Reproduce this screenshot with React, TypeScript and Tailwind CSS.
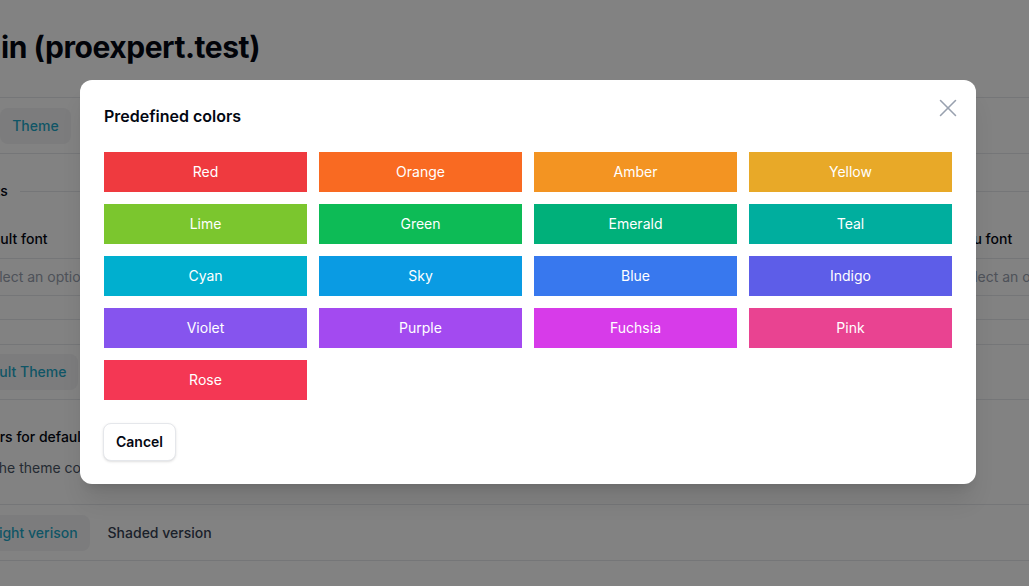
import { X } from 'lucide-react';

const colors = [
  { name: 'Red', hex: 'bg-[#ef3a3f]' },
  { name: 'Orange', hex: 'bg-[#f96a22]' },
  { name: 'Amber', hex: 'bg-[#f39422]' },
  { name: 'Yellow', hex: 'bg-[#e8a928]' },
  { name: 'Lime', hex: 'bg-[#7bc62e]' },
  { name: 'Green', hex: 'bg-[#0dbb56]' },
  { name: 'Emerald', hex: 'bg-[#00b07a]' },
  { name: 'Teal', hex: 'bg-[#00ae9e]' },
  { name: 'Cyan', hex: 'bg-[#00afcf]' },
  { name: 'Sky', hex: 'bg-[#0a9be3]' },
  { name: 'Blue', hex: 'bg-[#3878ee]' },
  { name: 'Indigo', hex: 'bg-[#5d5de8]' },
  { name: 'Violet', hex: 'bg-[#8654ee]' },
  { name: 'Purple', hex: 'bg-[#a34af0]' },
  { name: 'Fuchsia', hex: 'bg-[#d73be9]' },
  { name: 'Pink', hex: 'bg-[#e94391]' },
  { name: 'Rose', hex: 'bg-[#f43754]' },
];

const App = () => {
  return (
    <div className="relative h-[586px] w-full overflow-hidden bg-white font-[Inter,sans-serif] text-gray-950">
      {/* Page behind the modal */}
      <div className="-ml-[31px] w-[1200px]">
        <div className="pt-[29px] pb-8 border-b border-gray-200">
          <h1 className="-ml-[51px] text-[30px] leading-9 font-bold tracking-[-0.015em] whitespace-nowrap">
            Domain (proexpert.test)
          </h1>
        </div>

        <div className="flex items-center gap-2 h-14 border-b border-gray-200 ml-[-53px]">
          <span className="px-3 py-2 text-sm font-medium text-gray-500">General</span>
          <span className="px-3 h-9 flex items-center rounded-lg bg-gray-100 text-sm font-medium text-[#1ea8c8]">Theme</span>
        </div>

        <div className="pt-[27px]">
          <div className="flex items-center gap-3 ml-[2px] h-5">
            <span className="text-sm font-medium leading-5">Fonts</span>
            <div className="flex-1 border-t border-gray-200" />
          </div>

          <div className="mt-7 grid grid-cols-[951px_1fr] gap-x-6">
            {['Default font', 'Menu font'].map((label) => (
              <div key={label}>
                <div className="text-sm font-medium leading-5 whitespace-nowrap">{label}</div>
                <div className="mt-[9px] h-[38px] border-y border-gray-200 flex items-center pl-[13px] text-sm text-gray-400 whitespace-nowrap">
                  Select an option
                </div>
              </div>
            ))}
          </div>
          <div className="mt-[23px] border-t border-gray-200" />
        </div>

        <div className="mt-6 flex items-center h-14 border-y border-gray-200 ml-[-13px]">
          <span className="px-3 h-9 flex items-center rounded-lg bg-gray-100 text-sm font-medium text-[#1ea8c8] whitespace-nowrap">Default Theme</span>
        </div>

        <div className="pt-[27px]">
          <div className="text-sm font-medium leading-5 whitespace-nowrap">Colors for default theme</div>
          <div className="mt-[11px] -ml-[20px] text-sm leading-5 text-gray-600 whitespace-nowrap">Select the theme colors used in the default theme</div>
        </div>

        <div className="mt-[26px] flex items-center gap-1.5 h-[57px] border-y border-gray-200 ml-[10px]">
          <span className="px-3 h-9 flex items-center rounded-lg bg-gray-100 text-sm font-medium text-[#1ea8c8] whitespace-nowrap">Light verison</span>
          <span className="px-3 h-9 flex items-center text-sm font-medium text-gray-700 whitespace-nowrap">Shaded version</span>
        </div>
      </div>

      {/* Overlay + modal */}
      <div className="absolute inset-0 bg-[rgba(0,0,0,0.49)] flex items-start pl-20 pt-20">
        <div className="relative w-[896px] rounded-xl bg-white px-6 pt-6 pb-[23px] shadow-xl">
          <button className="absolute top-[13px] right-[13px] w-[30px] h-[30px] flex items-center justify-center text-gray-400">
            <X className="w-[30px] h-[30px]" strokeWidth={1.25} />
          </button>

          <h2 className="text-base font-semibold leading-6 text-gray-950">Predefined colors</h2>

          <div className="mt-6 grid grid-cols-4 gap-3">
            {colors.map((c) => (
              <div key={c.name} className={`h-10 flex items-center justify-center text-sm text-white ${c.hex}`}>
                {c.name}
              </div>
            ))}
          </div>

          <button className="mt-[23px] -ml-px h-[38px] px-3 rounded-lg border border-gray-200 bg-white text-sm font-semibold text-gray-950 shadow-sm">
            Cancel
          </button>
        </div>
      </div>
    </div>
  );
};

export default App;
